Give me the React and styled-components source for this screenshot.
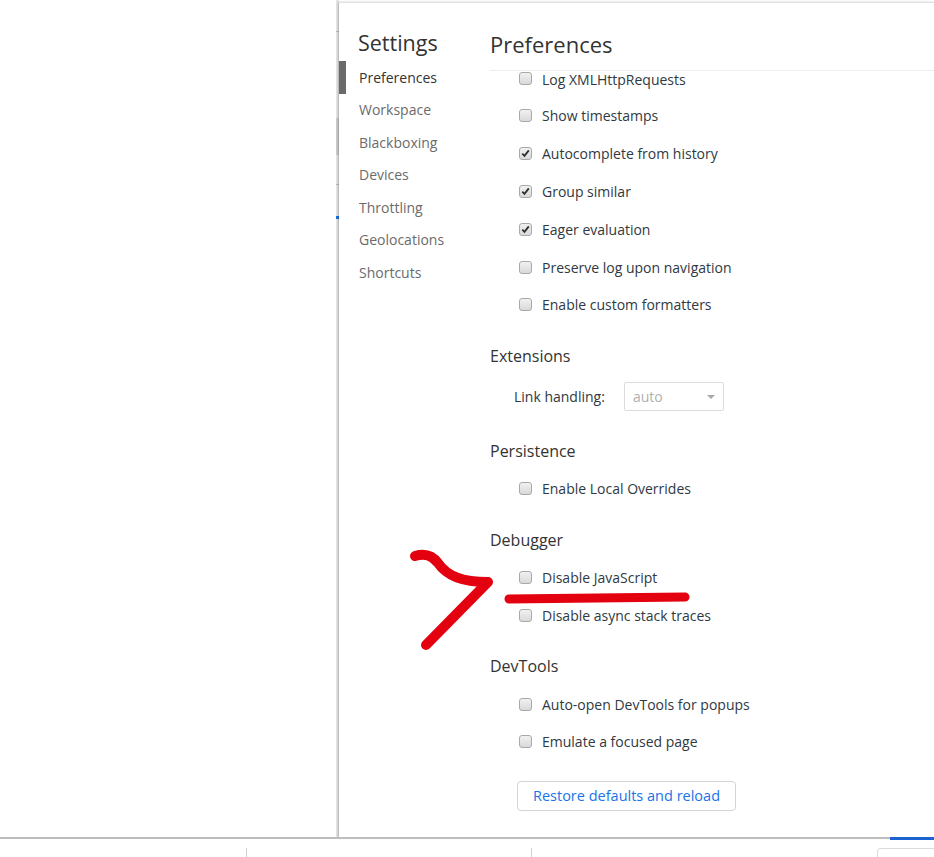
import styled, { createGlobalStyle } from "styled-components";

const GlobalStyle = createGlobalStyle`
  html, body {
    margin: 0;
    padding: 0;
    background: #fff;
    overflow: hidden;
  }
  body {
    font-family: "Open Sans", "Noto Sans", sans-serif;
    color: #303942;
  }
`

const Screen = styled.div`
  width: 934px;
  height: 857px;
  display: flex;
  flex-direction: column;
  position: relative;
  overflow: hidden;
`
const MainArea = styled.div`
  height: 837px;
  display: grid;
  grid-template-columns: 339px 1fr;
`
const BehindPage = styled.div`
  display: flex;
  justify-content: flex-end;
`
const EdgeStrip = styled.div`
  width: 3px;
  background: #e6e6e6;
  display: flex;
  flex-direction: column;
`
const EdgeMark = styled.div`
  height: ${p => p.$h}px;
  margin-top: ${p => p.$top}px;
  background: ${p => p.$color};
`
const Panel = styled.div`
  margin-top: 2px;
  background: #fff;
  display: flex;
  border-top: 1px solid #e2e2e2;
  box-shadow: -1px 0 2px rgba(0, 0, 0, 0.18), 0 1px 2px rgba(0, 0, 0, 0.2);
`
const Sidebar = styled.div`
  width: 151px;
  flex-shrink: 0;
  padding-top: 25px;
`
const SidebarTitle = styled.div`
  font-size: 21.5px;
  line-height: 30px;
  color: #333;
  padding-left: 19px;
  margin-bottom: 3px;
`
const NavItem = styled.div`
  height: 32.5px;
  display: flex;
  align-items: center;
  font-size: 14px;
  color: ${p => (p.$active ? "#333" : "#6b6b6b")};
  border-left: 7px solid ${p => (p.$active ? "#6a6a6a" : "transparent")};
  padding-left: 13px;
`
const Content = styled.div`
  flex: 1;
  display: flex;
  flex-direction: column;
  min-width: 0;
`
const ContentHeader = styled.div`
  font-size: 22px;
  line-height: 30px;
  color: #333;
  padding: 26px 0 11px 0;
  border-bottom: 1px solid #eee;
`
const Scroller = styled.div`
  flex: 1;
  overflow: hidden;
`
// first row is partly scrolled out of view, so it is shorter and top-aligned
const Row = styled.label`
  height: ${p => (p.$partial ? "26px" : "37.8px")};
  display: flex;
  align-items: ${p => (p.$partial ? "flex-start" : "center")};
  padding-top: ${p => (p.$partial ? "1px" : "0")};
  box-sizing: border-box;
  gap: 10px;
  padding-left: 29px;
  font-size: 14px;
  line-height: 15px;
  color: #303942;
`
const Box = styled.span`
  width: 13px;
  height: 13px;
  flex-shrink: 0;
  box-sizing: border-box;
  border: 1px solid #a9a9a9;
  border-radius: 3px;
  background: linear-gradient(#f1f1f1, #d9d9d9);
  display: flex;
  align-items: center;
  justify-content: center;
`
const SectionTitle = styled.div`
  height: 38px;
  margin-top: 13px;
  display: flex;
  align-items: center;
  font-size: 16px;
  color: #333;
`
const FieldRow = styled.div`
  height: 44px;
  display: flex;
  align-items: center;
  gap: 19px;
  padding-left: 24px;
  font-size: 14px;
  color: #303942;
`
const Select = styled.div`
  width: 100px;
  height: 29px;
  box-sizing: border-box;
  border: 1px solid #dcdcdc;
  border-radius: 2px;
  display: flex;
  align-items: center;
  justify-content: space-between;
  padding: 0 8px;
  color: #b0b0b0;
  font-size: 14px;
`
const Arrow = styled.span`
  width: 0;
  height: 0;
  border-left: 4px solid transparent;
  border-right: 4px solid transparent;
  border-top: 4px solid #a8a8a8;
`
const ButtonRow = styled.div`
  padding: 20px 0 0 27px;
`
const Button = styled.button`
  width: 219px;
  height: 30px;
  border: 1px solid #d4d4d4;
  border-radius: 4px;
  background: #fff;
  color: #1a73e8;
  font-family: "Open Sans", "Noto Sans", sans-serif;
  font-size: 14.5px;
  font-weight: 500;
  padding: 0;
`
const Divider = styled.div`
  height: 3px;
  display: flex;
`
const DividerGray = styled.div`
  flex: 1;
  border-top: 2px solid #bdbdbd;
`
const DividerBlue = styled.div`
  width: 44px;
  background: #1b63d0;
`
const BottomBar = styled.div`
  flex: 1;
  display: flex;
  align-items: flex-end;
`
const BottomCell = styled.div`
  width: ${p => p.$w}px;
  height: 9px;
  border-right: 1px solid #d0d0d0;
  flex-shrink: 0;
`
const BottomSpacer = styled.div`
  flex: 1;
`
const BottomBox = styled.div`
  width: 56px;
  height: 8px;
  border: 1px solid #dcdcdc;
  border-bottom: none;
  border-right: none;
  border-top-left-radius: 4px;
`
const Annotation = styled.svg`
  position: absolute;
  left: 0;
  top: 0;
  pointer-events: none;
`

function Check({ checked }) {
  return (
    <Box>
      {checked && (
        <svg width="9" height="9" viewBox="0 0 9 9">
          <path d="M1.3 4.6 L3.5 6.8 L7.8 1.4" fill="none" stroke="#2e2e2e" strokeWidth="1.8" />
        </svg>
      )}
    </Box>
  )
}

const navItems = ["Preferences", "Workspace", "Blackboxing", "Devices", "Throttling", "Geolocations", "Shortcuts"]

const consoleRows = [
  ["Log XMLHttpRequests", false],
  ["Show timestamps", false],
  ["Autocomplete from history", true],
  ["Group similar", true],
  ["Eager evaluation", true],
  ["Preserve log upon navigation", false],
  ["Enable custom formatters", false],
]

function App() {
  return (
    <Screen>
      <GlobalStyle />
      <MainArea>
        <BehindPage>
          <EdgeStrip>
            <EdgeMark $top={31} $h={1} $color="#bdbdbd" />
            <EdgeMark $top={86} $h={37} $color="#cdcdcd" />
            <EdgeMark $top={29} $h={1} $color="#bdbdbd" />
            <EdgeMark $top={31} $h={3} $color="#1a73e8" />
          </EdgeStrip>
        </BehindPage>
        <Panel>
          <Sidebar>
            <SidebarTitle>Settings</SidebarTitle>
            {navItems.map((item, i) => (
              <NavItem key={item} $active={i === 0}>{item}</NavItem>
            ))}
          </Sidebar>
          <Content>
            <ContentHeader>Preferences</ContentHeader>
            <Scroller>
              {consoleRows.map(([label, on], i) => (
                <Row key={label} $partial={i === 0}><Check checked={on} />{label}</Row>
              ))}
              <SectionTitle>Extensions</SectionTitle>
              <FieldRow>
                Link handling:
                <Select>auto<Arrow /></Select>
              </FieldRow>
              <SectionTitle>Persistence</SectionTitle>
              <Row><Check />Enable Local Overrides</Row>
              <SectionTitle>Debugger</SectionTitle>
              <Row><Check />Disable JavaScript</Row>
              <Row><Check />Disable async stack traces</Row>
              <SectionTitle>DevTools</SectionTitle>
              <Row><Check />Auto-open DevTools for popups</Row>
              <Row><Check />Emulate a focused page</Row>
              <ButtonRow>
                <Button>Restore defaults and reload</Button>
              </ButtonRow>
            </Scroller>
          </Content>
        </Panel>
      </MainArea>
      <Divider>
        <DividerGray />
        <DividerBlue />
      </Divider>
      <BottomBar>
        <BottomCell $w={246} />
        <BottomCell $w={284} />
        <BottomSpacer />
        <BottomBox />
      </BottomBar>
      <Annotation width="934" height="857" viewBox="0 0 934 857">
        <path
          d="M415 556 C425 553 432 555 438 563 C447 576 462 582 488 582 L426 645"
          fill="none"
          stroke="#e3000f"
          strokeWidth="10"
          strokeLinecap="round"
          strokeLinejoin="round"
        />
        <path d="M509 599 L685 597" fill="none" stroke="#e3000f" strokeWidth="9" strokeLinecap="round" />
      </Annotation>
    </Screen>
  )
}

export default App
